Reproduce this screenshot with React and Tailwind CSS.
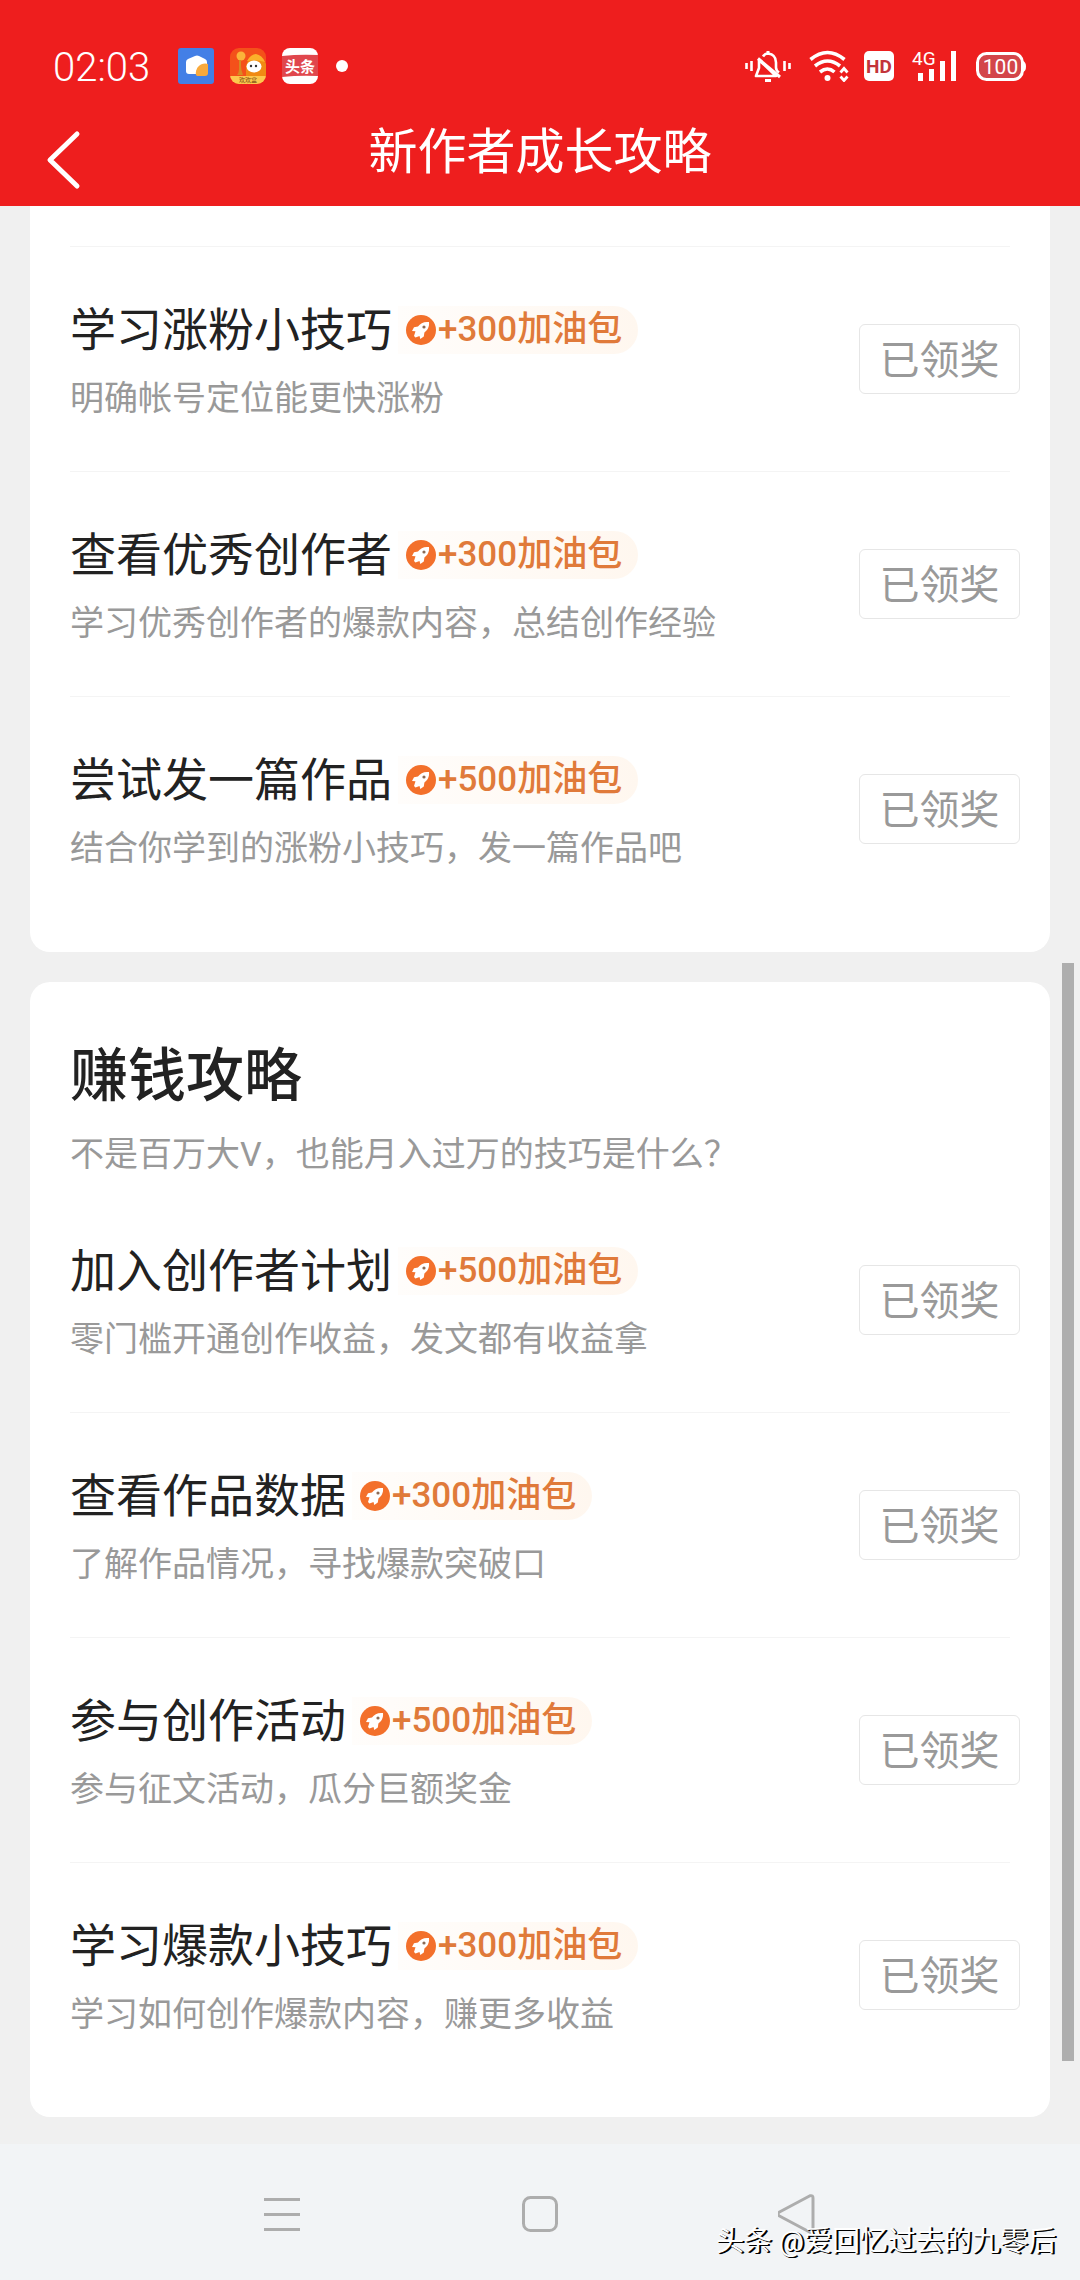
const growthTasks = [
  { title: '学习涨粉小技巧', reward: 300, desc: '明确帐号定位能更快涨粉' },
  { title: '查看优秀创作者', reward: 300, desc: '学习优秀创作者的爆款内容，总结创作经验' },
  { title: '尝试发一篇作品', reward: 500, desc: '结合你学到的涨粉小技巧，发一篇作品吧' },
];

const earningTasks = [
  { title: '加入创作者计划', reward: 500, desc: '零门槛开通创作收益，发文都有收益拿' },
  { title: '查看作品数据', reward: 300, desc: '了解作品情况，寻找爆款突破口' },
  { title: '参与创作活动', reward: 500, desc: '参与征文活动，瓜分巨额奖金' },
  { title: '学习爆款小技巧', reward: 300, desc: '学习如何创作爆款内容，赚更多收益' },
];

export default function App() {
  return (
    <div className="flex min-h-screen flex-col bg-[#f0f0f0] font-[Roboto,'Noto_Sans_CJK_SC',sans-serif]">
      <header className="bg-[#ee1e1e] pb-2 pt-10 text-white">
        <StatusBar />
        <TitleBar />
      </header>
      <main className="flex flex-1">
        <div className="flex flex-1 flex-col gap-[30px] pb-[26px] pl-[30px]">
          <section className="rounded-b-[20px] bg-white pb-[31px] pl-10 pr-[30px] pt-10">
            <Divider />
            <TaskList tasks={growthTasks} />
          </section>
          <section className="rounded-[20px] bg-white pb-[30px] pl-10 pr-[30px] pt-16">
            <h2 className="text-[58px] font-medium leading-[60px] text-[#222]">赚钱攻略</h2>
            <p className="mb-[10px] mt-6 text-[34px] leading-[48px] text-[#999]">
              不是百万大V，也能月入过万的技巧是什么？
            </p>
            <TaskList tasks={earningTasks} />
          </section>
        </div>
        <ScrollTrack />
      </main>
      <BottomNav />
    </div>
  );
}

const StatusBar = () => {
  return (
    <div className="flex h-[52px] items-center justify-between pl-[53px] pr-[54px]">
      <div className="flex items-center gap-4">
        <time className="mr-3 pt-1 text-[40px] font-light leading-[52px]">02:03</time>
        <WeatherIcon />
        <GameIcon />
        <ToutiaoIcon />
        <span className="ml-0.5 size-3 rounded-full bg-white" />
      </div>
      <div className="flex items-center">
        <BellOffIcon />
        <WifiIcon />
        <HdIcon />
        <SignalIcon />
        <BatteryIcon />
      </div>
    </div>
  );
};

const TitleBar = () => {
  return (
    <div className="grid h-[106px] grid-cols-[96px_1fr_96px] items-center">
      <button type="button" aria-label="返回" className="pl-[46px] pt-[30px]">
        <svg viewBox="0 0 36 60" className="h-[60px] w-9" fill="none" stroke="#fff" strokeWidth="5">
          <path d="M31 4 4 30l27 26" strokeLinecap="round" strokeLinejoin="round" />
        </svg>
      </button>
      <h1 className="pt-4 text-center text-[49px] leading-[72px]">新作者成长攻略</h1>
    </div>
  );
};

const TaskList = ({ tasks }) => {
  return (
    <ul>
      {tasks.map((task, index) => (
        <li key={task.title}>
          {index > 0 && <Divider />}
          <TaskRow task={task} />
        </li>
      ))}
    </ul>
  );
};

const TaskRow = ({ task }) => {
  return (
    <div className="flex h-56 items-center justify-between">
      <div className="flex flex-col gap-[14px] pt-1">
        <div className="flex items-center gap-[6px]">
          <h3 className="text-[46px] leading-[60px] text-[#222]">{task.title}</h3>
          <RewardBadge amount={task.reward} />
        </div>
        <p className="text-[34px] leading-[48px] text-[#999]">{task.desc}</p>
      </div>
      <button
        type="button"
        className="h-[70px] w-[161px] rounded-md border border-[#e6e6e6] pt-1 text-[40px] leading-[64px] text-[#999]"
      >
        已领奖
      </button>
    </div>
  );
};

const RewardBadge = ({ amount }) => {
  return (
    <span className="flex h-12 items-center gap-0.5 rounded-r-full bg-gradient-to-r from-[#fffdfb] to-[#fff7ef] pl-2 pr-4 text-[35px] font-medium leading-[48px] text-[#e07a3a]">
      <svg viewBox="0 0 30 30" className="size-[30px]">
        <circle cx="15" cy="15" r="15" fill="#f3702b" />
        <path
          d="M23 7c-5-.6-8.600 1-11 4.500l-4 .8L6 16l3.500.3L8 21l1.500 1.500 4-1.500.8 3 3.500-2.500.6-4C21.600 15 23.500 12 23 7Z"
          fill="#fff"
        />
        <circle cx="18" cy="12" r="1.600" fill="#8a6a55" />
      </svg>
      <span>+{amount}加油包</span>
    </span>
  );
};

const Divider = () => {
  return <hr className="mr-[10px] border-[#f4f4f4]" />;
};

const ScrollTrack = () => {
  return (
    <div className="flex w-[30px] flex-col pl-3">
      <div className="flex-[757]" />
      <div className="w-3 flex-[1098] bg-[#aeaeae]" />
      <div className="flex-[83]" />
    </div>
  );
};

const BottomNav = () => {
  return (
    <footer className="relative flex h-[136px] items-center justify-center gap-[218px] bg-[#f2f4f6] pt-1">
      <button type="button" aria-label="最近任务">
        <svg viewBox="0 0 40 40" className="size-10" stroke="#adadad" strokeWidth="3">
          <path d="M2 5.500h36M2 20.500h36M2 35.500h36" />
        </svg>
      </button>
      <button type="button" aria-label="主屏幕">
        <svg viewBox="0 0 40 40" className="size-10" fill="none" stroke="#adadad" strokeWidth="3">
          <rect x="3.500" y="3.500" width="33" height="33" rx="7" />
        </svg>
      </button>
      <button type="button" aria-label="返回上一页">
        <svg viewBox="0 0 40 40" className="size-10" fill="none" stroke="#adadad" strokeWidth="3">
          <path d="M32 1.800 1 18.300q-2 1.700 0 3.400L32 38.200q3 .8 3-2.200V4q0-3-3-2.200Z" strokeLinejoin="round" />
        </svg>
      </button>
      <p className="absolute bottom-[18px] right-6 whitespace-nowrap text-[28px] leading-10 text-white [text-shadow:1px_1px_0_#000,2px_1px_0_#000]">
        头条 @爱回忆过去的九零后
      </p>
    </footer>
  );
};

const WeatherIcon = () => (
  <svg viewBox="0 0 36 36" className="size-9">
    <rect width="36" height="36" rx="3" fill="#437fe6" />
    <path d="M8 14q0-2 2-3l7-3q2-.8 4 0l6 3q2 1 2 3v12H11q-3 0-3-3Z" fill="#fff" />
    <path d="M18 27a9.500 9.500 0 0 1 12-11v9q0 3-3 3h-8Z" fill="#f9a93c" />
  </svg>
);

const GameIcon = () => (
  <svg viewBox="0 0 36 36" className="size-9">
    <defs>
      <clipPath id="game-clip">
        <rect width="36" height="36" rx="9" />
      </clipPath>
    </defs>
    <g clipPath="url(#game-clip)">
      <rect width="36" height="36" fill="#f4511a" />
      <path d="M16 28V18q2-9 10-11 6 1 10 9v12Z" fill="#f08a14" />
      <path d="M17 13q4-7 9-7 6 1 9 8-9-3-18-1Z" fill="#fbb02a" />
      <circle cx="11" cy="8" r="4.500" fill="#fbb43a" />
      <path d="M9 12v8q0 5-2 7h6q-2-5-2-9v-6Z" fill="#d88a22" />
      <ellipse cx="24" cy="18.500" rx="7.500" ry="6" fill="#fff" />
      <circle cx="21" cy="18" r="1.200" fill="#333" />
      <circle cx="26" cy="18" r="1.200" fill="#333" />
      <rect y="28" width="36" height="8" fill="#fdc74e" />
      <text x="18" y="34" textAnchor="middle" fontSize="6" fill="#7a4a10">
        欢欢盒
      </text>
    </g>
  </svg>
);

const ToutiaoIcon = () => (
  <svg viewBox="0 0 36 36" className="size-9">
    <rect width="36" height="36" rx="8" fill="#fff" />
    <path d="M0 8q18-2 36-1v21q-18-1-36 1Z" fill="#e0474d" />
    <text x="18" y="23.500" textAnchor="middle" fontSize="15" fontWeight="700" fill="#fff">
      头条
    </text>
  </svg>
);

const BellOffIcon = () => (
  <svg viewBox="0 0 46 32" className="h-8 w-[46px]" fill="none" stroke="#fff" strokeWidth="2.600">
    <path d="M1.500 13v6M6.500 11v10M39.500 11v10M44.500 13v6" />
    <path d="M13 8.500 35 27" strokeWidth="3" />
    <path d="M14 10v8l-3 8h20L14 10" strokeLinejoin="round" />
    <path d="M18 6.500q2-3 5-3 8 1 8 9v5q0 3 3 5" />
    <path d="M20 30.500h6M23 1v3" strokeWidth="3" />
  </svg>
);

const WifiIcon = () => (
  <svg viewBox="0 0 40 32" className="ml-[18px] h-8 w-10" fill="none" stroke="#fff" strokeWidth="3.600">
    <path d="M1.500 9.500q17-14 34 0M6 16q12.500-10 25 0M11 22q7.500-6 14.500 0" />
    <circle cx="18.500" cy="28" r="3" fill="#fff" stroke="none" />
    <path d="M31.500 22.500l3.500-4 3.500 4M31.500 26.500l3.500 4 3.500-4" strokeWidth="2.800" />
  </svg>
);

const HdIcon = () => (
  <svg viewBox="0 0 30 30" className="ml-[15px] size-[30px]">
    <rect width="30" height="30" rx="5" fill="#fff" />
    <text x="15" y="22" textAnchor="middle" fontSize="19" fontWeight="700" fill="#c3343a">
      HD
    </text>
  </svg>
);

const SignalIcon = () => (
  <svg viewBox="0 0 46 32" className="ml-[18px] h-8 w-[46px] overflow-visible">
    <text x="0" y="15" fontSize="19" fill="#fff">
      4G
    </text>
    <path d="M6 23h5v8H6zM17 19h5v12h-5zM28 11h5v20h-5zM39 1h5v30h-5z" fill="#fff" />
  </svg>
);

const BatteryIcon = () => (
  <svg viewBox="0 0 50 30" className="ml-[18px] h-[30px] w-[50px]">
    <rect x="1.500" y="2.500" width="45" height="26" rx="9" fill="#d3454a" stroke="#fff" strokeWidth="3" />
    <path d="M47 10q3 1 3 5.500T47 21Z" fill="#fff" />
    <text x="24.500" y="22.500" textAnchor="middle" fontSize="21" fill="#fff">
      100
    </text>
  </svg>
);
